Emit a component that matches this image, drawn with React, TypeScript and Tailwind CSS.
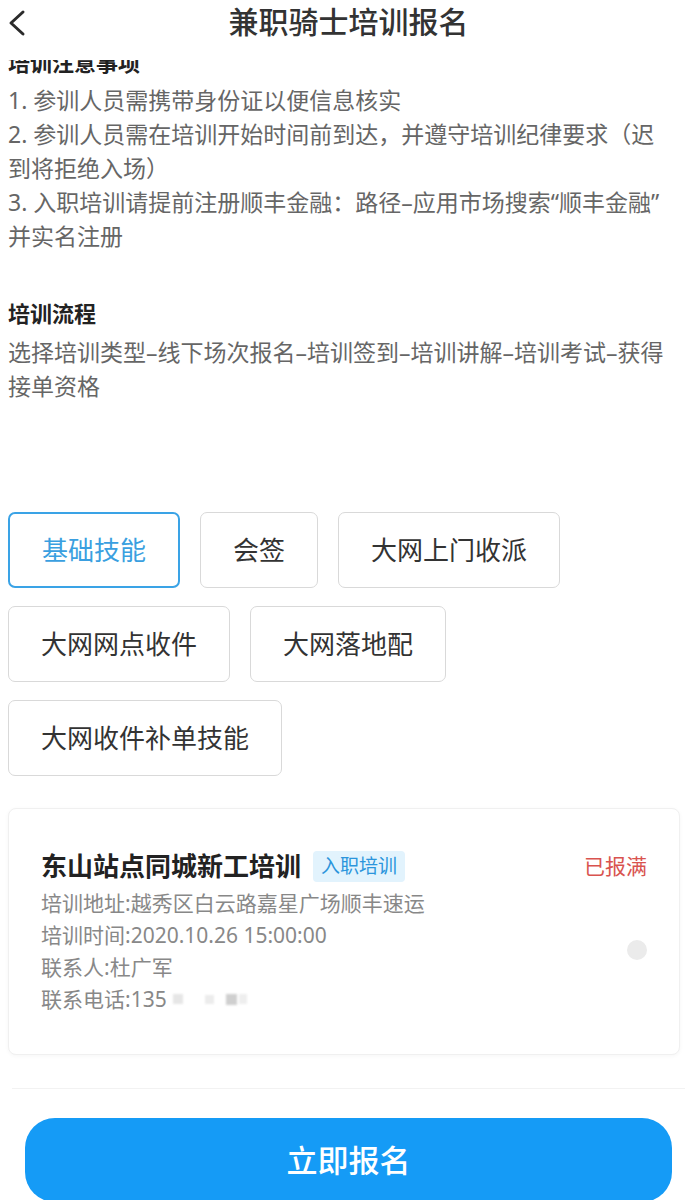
import React from 'react';

const tags = [
    { label: '基础技能', active: true },
    { label: '会签' },
    { label: '大网上门收派' },
    { label: '大网网点收件' },
    { label: '大网落地配' },
    { label: '大网收件补单技能' },
];

export default function App() {
    return (
        <div
            className="w-[697px] h-[1200px] overflow-hidden bg-white flex flex-col"
            style={{ fontFamily: '"Noto Sans", "Noto Sans CJK SC", sans-serif' }}
        >
            {/* Header */}
            <header className="relative z-10 h-[60px] shrink-0 bg-white flex items-start justify-center">
                <svg className="absolute left-[6px] top-[9px]" width="22" height="28" viewBox="0 0 22 28" fill="none">
                    <polyline points="17,3 5,14 17,25" stroke="#2b2b2b" strokeWidth="3" strokeLinecap="round" strokeLinejoin="round" />
                </svg>
                <h1 className="text-[30px] leading-[44px] font-medium text-[#333]">兼职骑士培训报名</h1>
            </header>

            <main className="flex-1 flex flex-col overflow-hidden">
                {/* Notes, scrolled up under the header */}
                <section className="pl-2 pr-[18px] text-[23px] leading-[34px]">
                    <h2 className="-mt-[15px] font-bold text-[22px] text-[#222]">培训注意事项</h2>
                    <div className="mt-1 text-[#666]">
                        <p>1. 参训人员需携带身份证以便信息核实</p>
                        <p>
                            2. 参训人员需在培训开始时间前到达，并遵守培训纪律要求（迟
                            <br />
                            到将拒绝入场）
                        </p>
                        <p>
                            3. 入职培训请提前注册顺丰金融：路径–应用市场搜索“顺丰金融”
                            <br />
                            并实名注册
                        </p>
                    </div>

                    <h2 className="mt-[43px] font-bold text-[22px] text-[#222]">培训流程</h2>
                    <p className="mt-[5px] text-[#666]">选择培训类型–线下场次报名–培训签到–培训讲解–培训考试–获得接单资格</p>
                </section>

                {/* Tags */}
                <div className="mt-[109px] px-2 flex flex-wrap gap-x-5 gap-y-[18px]">
                    {tags.map((t) =>
                        t.active ? (
                            <div
                                key={t.label}
                                className="h-[76px] px-8 flex items-center rounded-[7px] border-2 border-[#3aa3e6] text-[26px] text-[#3a9fe0]"
                            >
                                {t.label}
                            </div>
                        ) : (
                            <div
                                key={t.label}
                                className="h-[76px] px-8 flex items-center rounded-[7px] border border-[#d9d9d9] text-[26px] text-[#333]"
                            >
                                {t.label}
                            </div>
                        )
                    )}
                </div>

                {/* Card */}
                <div className="mt-8 mx-2 w-[672px] h-[247px] shrink-0 rounded-[8px] border border-[#f0f0f0] bg-white shadow-[0_1px_4px_rgba(0,0,0,0.04)] px-8 pt-[40px] flex">
                    <div className="flex-1">
                        <div className="flex items-center gap-3">
                            <span className="text-[26px] leading-[34px] font-bold text-[#222]">东山站点同城新工培训</span>
                            <span className="h-[31px] px-2 flex items-center rounded-[4px] bg-[#e2f3fd] text-[19px] text-[#2b95dc]">入职培训</span>
                        </div>
                        <div className="mt-[4px] text-[21px] leading-[32px] text-[#888]">
                            <p>培训地址:越秀区白云路嘉星广场顺丰速运</p>
                            <p>培训时间:2020.10.26 15:00:00</p>
                            <p>联系人:杜广军</p>
                            <p className="flex items-center">
                                联系电话:135
                                <span className="ml-[6px] w-[10px] h-[10px] bg-[#e6e6e6] blur-[1px]" />
                                <span className="ml-[22px] w-[9px] h-[9px] bg-[#ececec] blur-[1px]" />
                                <span className="ml-[12px] w-[11px] h-[11px] bg-[#cfcfcf] blur-[1px]" />
                                <span className="ml-[2px] w-[8px] h-[10px] bg-[#eeeeee] blur-[1px]" />
                            </p>
                        </div>
                    </div>
                    <div className="flex flex-col items-end">
                        <span className="text-[21px] leading-[34px] text-[#d9534f]">已报满</span>
                        <span className="mt-[57px] w-5 h-5 rounded-full bg-[#ebebeb]" />
                    </div>
                </div>

                <div className="mt-[33px] mx-3 h-px bg-[#f2f2f2] shrink-0" />

                {/* Submit */}
                <button className="mt-[29px] mx-[25px] h-[84px] shrink-0 rounded-[30px] bg-[#159bf6] text-white text-[31px] font-medium">
                    立即报名
                </button>
            </main>
        </div>
    );
}
